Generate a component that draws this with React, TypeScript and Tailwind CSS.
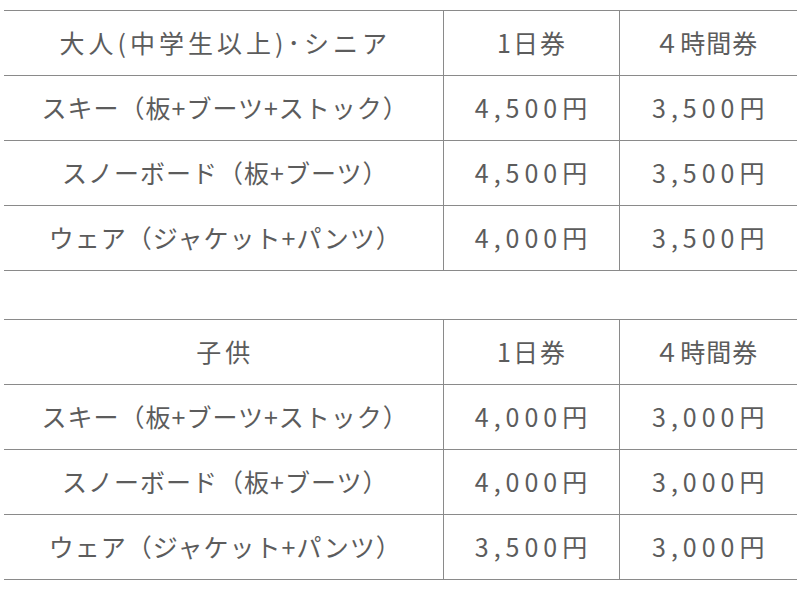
const font = { fontFamily: '"Noto Sans CJK JP", "Noto Sans", sans-serif' }

type Table = { head: string; rows: [string, string, string][] }

const tables: Table[] = [
  {
    head: "大人(中学生以上)･シニア",
    rows: [
      ["スキー（板+ブーツ+ストック）", "4,500円", "3,500円"],
      ["スノーボード（板+ブーツ）", "4,500円", "3,500円"],
      ["ウェア（ジャケット+パンツ）", "4,000円", "3,500円"],
    ],
  },
  {
    head: "子供",
    rows: [
      ["スキー（板+ブーツ+ストック）", "4,000円", "3,000円"],
      ["スノーボード（板+ブーツ）", "4,000円", "3,000円"],
      ["ウェア（ジャケット+パンツ）", "3,500円", "3,000円"],
    ],
  },
]

function PriceTable({ table }: { table: Table }) {
  return (
    <table className="w-[793px] border-collapse text-[#5c5c5c]">
      <thead>
        <tr className="h-[65px] border-y border-[#8a8a8a] text-[25px]">
          <th className="w-[439px] border-r border-[#8a8a8a] pl-[4px] font-normal tracking-[4px]">{table.head}</th>
          <th className="w-[176px] border-r border-[#8a8a8a] pl-[2px] font-normal tracking-[2px]">1日券</th>
          <th className="pr-[4px] font-normal tracking-[1px]">４時間券</th>
        </tr>
      </thead>
      <tbody>
        {table.rows.map((r, i) => (
          <tr key={i} className="h-[65px] border-y border-[#8a8a8a] text-[25px]">
            <td className="border-r border-[#8a8a8a] pl-[4px] text-center tracking-[1px]">{r[0]}</td>
            <td className="border-r border-[#8a8a8a] pl-[5px] text-center tracking-[5px]">{r[1]}</td>
            <td className="pl-[5px] text-center tracking-[5px]">{r[2]}</td>
          </tr>
        ))}
      </tbody>
    </table>
  )
}

export default function App() {
  return (
    <div className="w-[800px] h-[589px] bg-white pt-[10px] pl-[4px]" style={font}>
      <div className="flex flex-col gap-[48px]">
        {tables.map((t, i) => (
          <PriceTable key={i} table={t} />
        ))}
      </div>
    </div>
  )
}
